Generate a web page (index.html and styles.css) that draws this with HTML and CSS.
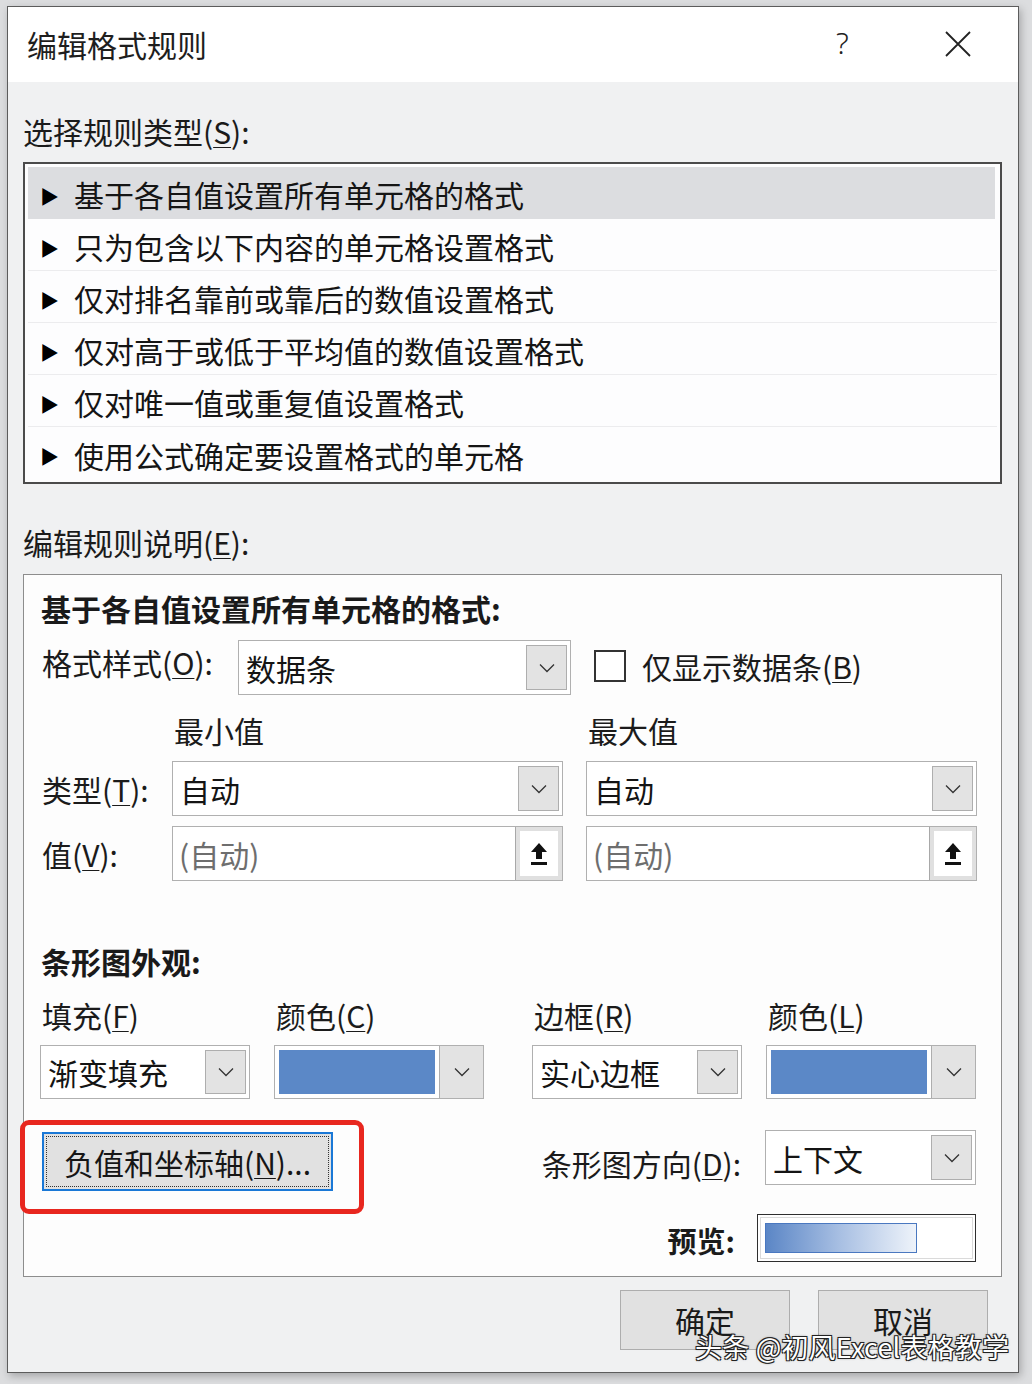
FILE: index.html
```html
<!DOCTYPE html>
<html lang="zh-CN">
<head>
  <meta charset="UTF-8">
  <title>编辑格式规则</title>
  <link rel="stylesheet" href="styles.css">
</head>
<body>
  <div class="dialog">
    <div class="titlebar">
      <span class="title">编辑格式规则</span>
      <span class="help">?</span>
      <span class="close">
        <svg width="28" height="28" viewBox="0 0 28 28"><path d="M2 2 L26 26 M26 2 L2 26" stroke="#222" stroke-width="1.8" fill="none"/></svg>
      </span>
    </div>

    <div class="body">
      <div class="section-label">选择规则类型(<u>S</u>):</div>
      <ul class="rule-list">
        <li class="selected"><span class="arrow">&#9654;</span>基于各自值设置所有单元格的格式</li>
        <li><span class="arrow">&#9654;</span>只为包含以下内容的单元格设置格式</li>
        <li><span class="arrow">&#9654;</span>仅对排名靠前或靠后的数值设置格式</li>
        <li><span class="arrow">&#9654;</span>仅对高于或低于平均值的数值设置格式</li>
        <li><span class="arrow">&#9654;</span>仅对唯一值或重复值设置格式</li>
        <li><span class="arrow">&#9654;</span>使用公式确定要设置格式的单元格</li>
      </ul>

      <div class="section-label desc-label">编辑规则说明(<u>E</u>):</div>
      <div class="desc-box">
        <div class="desc-head">基于各自值设置所有单元格的格式:</div>

        <div class="style-row">
          <span class="style-label">格式样式(<u>O</u>):</span>
          <div class="select style-select">
            <span class="select-text">数据条</span>
            <span class="drop"><svg width="16" height="10" viewBox="0 0 16 10"><path d="M1 1.5 L8 8.5 L15 1.5" stroke="#333" stroke-width="1.3" fill="none"/></svg></span>
          </div>
          <span class="checkbox"></span>
          <span class="check-label">仅显示数据条(<u>B</u>)</span>
        </div>

        <div class="minmax">
          <span></span>
          <span class="col-head">最小值</span>
          <span class="col-head">最大值</span>

          <span class="row-label">类型(<u>T</u>):</span>
          <div class="select">
            <span class="select-text">自动</span>
            <span class="drop"><svg width="16" height="10" viewBox="0 0 16 10"><path d="M1 1.5 L8 8.5 L15 1.5" stroke="#333" stroke-width="1.3" fill="none"/></svg></span>
          </div>
          <div class="select">
            <span class="select-text">自动</span>
            <span class="drop"><svg width="16" height="10" viewBox="0 0 16 10"><path d="M1 1.5 L8 8.5 L15 1.5" stroke="#333" stroke-width="1.3" fill="none"/></svg></span>
          </div>

          <span class="row-label">值(<u>V</u>):</span>
          <div class="input">
            <span class="input-text">(自动)</span>
            <span class="upload"><span class="upload-face"><svg width="20" height="26" viewBox="0 0 20 26"><path d="M10 2 L2 11 L7 11 L7 18 L13 18 L13 11 L18 11 Z" fill="#111"/><rect x="2" y="21" width="16" height="3" fill="#111"/></svg></span></span>
          </div>
          <div class="input">
            <span class="input-text">(自动)</span>
            <span class="upload"><span class="upload-face"><svg width="20" height="26" viewBox="0 0 20 26"><path d="M10 2 L2 11 L7 11 L7 18 L13 18 L13 11 L18 11 Z" fill="#111"/><rect x="2" y="21" width="16" height="3" fill="#111"/></svg></span></span>
          </div>
        </div>

        <div class="desc-head bar-head">条形图外观:</div>

        <div class="appearance">
          <div class="app-group">
            <span class="app-label">填充(<u>F</u>)</span>
            <span class="app-label">颜色(<u>C</u>)</span>
            <div class="select small-select">
              <span class="select-text">渐变填充</span>
              <span class="drop"><svg width="16" height="10" viewBox="0 0 16 10"><path d="M1 1.5 L8 8.5 L15 1.5" stroke="#333" stroke-width="1.3" fill="none"/></svg></span>
            </div>
            <div class="select small-select color-select">
              <span class="swatch"></span>
              <span class="drop wide-drop"><svg width="16" height="10" viewBox="0 0 16 10"><path d="M1 1.5 L8 8.5 L15 1.5" stroke="#333" stroke-width="1.3" fill="none"/></svg></span>
            </div>
          </div>
          <div class="app-group">
            <span class="app-label">边框(<u>R</u>)</span>
            <span class="app-label">颜色(<u>L</u>)</span>
            <div class="select small-select">
              <span class="select-text">实心边框</span>
              <span class="drop"><svg width="16" height="10" viewBox="0 0 16 10"><path d="M1 1.5 L8 8.5 L15 1.5" stroke="#333" stroke-width="1.3" fill="none"/></svg></span>
            </div>
            <div class="select small-select color-select">
              <span class="swatch"></span>
              <span class="drop wide-drop"><svg width="16" height="10" viewBox="0 0 16 10"><path d="M1 1.5 L8 8.5 L15 1.5" stroke="#333" stroke-width="1.3" fill="none"/></svg></span>
            </div>
          </div>
        </div>

        <div class="axis-row">
          <div class="axis-wrap">
            <button class="axis-btn"><span class="focus-ring">负值和坐标轴(<u>N</u>)...</span></button>
            <span class="highlight"></span>
          </div>
          <div class="direction">
            <span class="dir-label">条形图方向(<u>D</u>):</span>
            <div class="select small-select">
              <span class="select-text">上下文</span>
              <span class="drop"><svg width="16" height="10" viewBox="0 0 16 10"><path d="M1 1.5 L8 8.5 L15 1.5" stroke="#333" stroke-width="1.3" fill="none"/></svg></span>
            </div>
          </div>
        </div>

        <div class="preview-row">
          <span class="preview-label">预览:</span>
          <div class="preview-box">
            <div class="preview-inner"><span class="preview-bar"></span></div>
          </div>
        </div>
      </div>

      <div class="actions">
        <button class="btn">确定</button>
        <button class="btn">取消</button>
      </div>
    </div>
  </div>

  <div class="watermark">头条 @初风Excel表格教学</div>
</body>
</html>
```

FILE: styles.css
```css
body {
  margin: 0;
  padding: 6px 0 0 7px;
  background: #dcdddf;
  font-family: "Noto Sans CJK SC", "Noto Sans", sans-serif;
  color: #1b1b1b;
  position: relative;
  height: 1378px;
  overflow: hidden;
}
u {
  text-decoration-thickness: 1px;
  text-underline-offset: 3px;
}
.dialog {
  width: 1012px;
  height: 1367px;
  box-sizing: border-box;
  border: 1px solid #5c5c5c;
  background: #f0f1f2;
  box-shadow: 2px 3px 8px rgba(0,0,0,0.25);
}
.titlebar {
  height: 75px;
  background: #fff;
  display: flex;
  align-items: center;
  padding: 0 0 0 19px;
}
.title {
  font-size: 30px;
  line-height: 40px;
  flex: 1;
  margin-top: -2px;
  color: #1e1e1e;
}
.help {
  font-family: "Noto Sans", sans-serif;
  font-size: 30px;
  font-weight: 300;
  color: #222;
  width: 20px;
  margin-right: 88px;
  margin-top: -4px;
}
.close {
  width: 28px;
  height: 28px;
  margin-right: 46px;
  margin-top: -2px;
}
.body {
  padding: 0 16px 0 15px;
}
.section-label {
  font-size: 30px;
  line-height: 40px;
  margin-top: 29px;
  height: 40px;
}
.rule-list {
  list-style: none;
  margin: 11px 0 0;
  padding: 3px 3px 2px;
  height: 322px;
  box-sizing: border-box;
  border: 2px solid #4b4b4b;
  background: #fdfdfe;
}
.rule-list li {
  height: 52px;
  box-sizing: border-box;
  display: flex;
  align-items: center;
  font-size: 30px;
  padding: 3px 0 0 12px;
  border-bottom: 1px solid #ececee;
  color: #151515;
}
.rule-list li:last-child {
  border-bottom: none;
}
.rule-list li.selected {
  background: #dcdde0;
  border-bottom-color: #dcdde0;
  margin-right: 2px;
}
.arrow {
  font-size: 19px;
  width: 34px;
  color: #000;
  margin-top: 2px;
}
.desc-label {
  margin-top: 38px;
}
.desc-box {
  margin-top: 12px;
  height: 703px;
  box-sizing: border-box;
  border: 1px solid #8d8d8d;
  background: #fdfdfd;
  padding: 13px 25px 0 16px;
}
.desc-head {
  font-size: 30px;
  line-height: 40px;
  font-weight: 700;
  color: #1a1a1a;
  padding-left: 1px;
}
.style-row {
  display: flex;
  align-items: center;
  margin-top: 12px;
  height: 55px;
}
.style-label {
  width: 198px;
  font-size: 30px;
  padding-left: 2px;
  box-sizing: border-box;
  margin-top: -12px;
}
.select {
  height: 55px;
  box-sizing: border-box;
  border: 1px solid #b0b0b0;
  background: #fff;
  display: flex;
  align-items: center;
  justify-content: space-between;
  padding: 4px 3px 4px 0;
}
.style-select {
  width: 333px;
}
.select-text {
  font-size: 30px;
  padding-left: 7px;
  color: #141414;
}
.drop {
  width: 41px;
  height: 100%;
  box-sizing: border-box;
  background: #e3e3e3;
  border: 1px solid #aeaeae;
  display: flex;
  align-items: center;
  justify-content: center;
}
.checkbox {
  width: 32px;
  height: 32px;
  box-sizing: border-box;
  border: 2px solid #333;
  background: #fff;
  margin-left: 23px;
  margin-top: -4px;
}
.check-label {
  font-size: 30px;
  margin-left: 16px;
  margin-top: -4px;
}
.minmax {
  display: grid;
  grid-template-columns: 109px 391px 391px;
  grid-template-rows: 40px 55px 55px;
  column-gap: 23px;
  row-gap: 10px;
  margin-top: 16px;
  align-items: center;
}
.col-head {
  font-size: 30px;
  padding-left: 2px;
  margin-top: -3px;
}
.row-label {
  font-size: 30px;
  padding-left: 2px;
}
.input {
  height: 55px;
  box-sizing: border-box;
  border: 1px solid #b0b0b0;
  background: #fff;
  display: flex;
  align-items: stretch;
  justify-content: space-between;
}
.input-text {
  font-size: 30px;
  color: #6e6e6e;
  padding-left: 6px;
  align-self: center;
}
.upload {
  width: 47px;
  box-sizing: border-box;
  background: #e0e0e0;
  border-left: 1px solid #a8a8a8;
  padding: 4px;
  display: flex;
}
.upload-face {
  flex: 1;
  background: #fff;
  display: flex;
  align-items: center;
  justify-content: center;
}
.bar-head {
  margin-top: 60px;
}
.appearance {
  display: flex;
  justify-content: space-between;
  margin-top: 14px;
}
.app-group {
  display: grid;
  grid-template-columns: 210px 210px;
  grid-template-rows: 40px 54px;
  column-gap: 24px;
  row-gap: 10px;
}
.app-label {
  font-size: 30px;
  line-height: 40px;
  padding-left: 2px;
}
.small-select {
  height: 54px;
}
.color-select {
  padding: 4px 0 4px 4px;
}
.swatch {
  flex: 1;
  height: 100%;
  background: #5b88c7;
  margin-right: 4px;
}
.wide-drop {
  width: 44px;
  border-top: none;
  border-bottom: none;
  border-right: none;
  height: calc(100% + 8px);
  margin: -4px 0;
}
.axis-row {
  display: flex;
  justify-content: space-between;
  margin-top: 31px;
  height: 61px;
}
.axis-wrap {
  position: relative;
  margin-left: 2px;
  margin-top: 2px;
}
.axis-btn {
  width: 291px;
  height: 59px;
  box-sizing: border-box;
  border: 2px solid #1a78d6;
  background: #e1e1e1;
  padding: 2px;
  font-family: inherit;
  color: #161616;
  display: flex;
}
.focus-ring {
  flex: 1;
  border: 1px dotted #333;
  font-size: 30px;
  display: flex;
  align-items: center;
  justify-content: center;
}
.highlight {
  position: absolute;
  left: -22px;
  top: -12px;
  width: 344px;
  height: 94px;
  box-sizing: border-box;
  border: 5px solid #e8271f;
  border-radius: 9px;
}
.direction {
  display: flex;
  align-items: flex-start;
  gap: 24px;
}
.dir-label {
  font-size: 30px;
  margin-top: 11px;
}
.direction .select {
  width: 211px;
  height: 55px;
}
.preview-row {
  display: flex;
  justify-content: flex-end;
  align-items: center;
  gap: 22px;
  margin-top: 23px;
}
.preview-label {
  font-size: 29px;
  font-weight: 700;
  margin-top: 4px;
}
.preview-box {
  width: 219px;
  height: 48px;
  box-sizing: border-box;
  border: 1px solid #2e2e2e;
  background: #fff;
  padding: 2px;
}
.preview-inner {
  height: 100%;
  box-sizing: border-box;
  border: 1px solid #dadada;
  padding: 5px 4px;
  display: flex;
}
.preview-bar {
  width: 152px;
  box-sizing: border-box;
  border: 1px solid #4a78c0;
  background: linear-gradient(to right, #5b86c6, #a9c0e3 50%, #eef3fa);
}
.actions {
  display: flex;
  justify-content: flex-end;
  gap: 28px;
  margin-top: 13px;
  margin-right: 14px;
}
.btn {
  width: 170px;
  height: 60px;
  box-sizing: border-box;
  border: 1px solid #adadad;
  background: #e1e1e1;
  font-family: inherit;
  font-size: 30px;
  color: #1a1a1a;
}
.watermark {
  position: absolute;
  left: 695px;
  top: 1327px;
  font-size: 27px;
  letter-spacing: 0.2px;
  color: #fff;
  white-space: nowrap;
  text-shadow: 1px 1px 0 #222, -1px -1px 0 #222, 1px -1px 0 #222, -1px 1px 0 #222, 0 0 3px rgba(0,0,0,0.6);
}
```
